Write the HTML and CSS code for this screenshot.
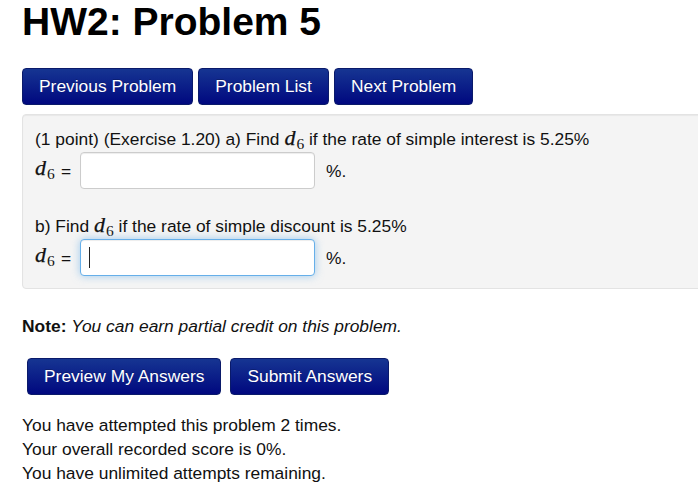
FILE: index.html
```html
<!DOCTYPE html>
<html lang="en">
<head>
<meta charset="utf-8">
<title>HW2: Problem 5</title>
<link rel="stylesheet" href="styles.css">
</head>
<body>
<div class="page">
  <h1 class="title">HW2: Problem 5</h1>
  <nav class="nav">
    <button class="btn nav-btn" type="button">Previous Problem</button>
    <button class="btn nav-btn" type="button">Problem List</button>
    <button class="btn nav-btn" type="button">Next Problem</button>
  </nav>
  <div class="well">
    <p class="line">(1 point) (Exercise 1.20) a) Find <span class="math"><i>d</i><sub>6</sub></span> if the rate of simple interest is 5.25%</p>
    <div class="answer-row">
      <span class="math label"><i>d</i><sub>6</sub></span><span class="eq">=</span>
      <span class="field"><input class="answer" type="text"></span>
      <span class="unit">%.</span>
    </div>
    <p class="line line-b">b) Find <span class="math"><i>d</i><sub>6</sub></span> if the rate of simple discount is 5.25%</p>
    <div class="answer-row">
      <span class="math label"><i>d</i><sub>6</sub></span><span class="eq">=</span>
      <span class="field"><input class="answer focused" type="text"><span class="caret"></span></span>
      <span class="unit">%.</span>
    </div>
  </div>
  <p class="note"><b>Note:</b> <i>You can earn partial credit on this problem.</i></p>
  <div class="actions">
    <button class="btn act-btn" type="button">Preview My Answers</button>
    <button class="btn act-btn" type="button">Submit Answers</button>
  </div>
  <div class="status">
    <p>You have attempted this problem 2 times.</p>
    <p>Your overall recorded score is 0%.</p>
    <p>You have unlimited attempts remaining.</p>
  </div>
</div>
</body>
</html>
```

FILE: styles.css
```css
html, body {
  margin: 0;
  padding: 0;
  background: #fff;
  overflow: hidden;
}
body {
  font-family: "Liberation Sans", Arial, sans-serif;
  font-size: 17.4px;
  line-height: 24px;
  color: #111;
}
.page {
  padding-left: 22px;
}
.title {
  margin: 0;
  padding-top: 2px;
  font-size: 39px;
  line-height: 39px;
  font-weight: bold;
  color: #000;
}
.nav {
  display: flex;
  gap: 5px;
  margin-top: 27px;
}
.btn {
  font-family: "Liberation Sans", Arial, sans-serif;
  font-size: 17.4px;
  color: #fff;
  height: 37px;
  border: 1px solid #0a1a6a;
  border-radius: 4px;
  background: linear-gradient(to bottom, #163592 0%, #00087f 100%);
  cursor: pointer;
  white-space: nowrap;
  text-shadow: 0 -1px 0 rgba(0,0,0,0.2);
}
.nav-btn {
  padding: 0 16px;
}
.well {
  margin-top: 9px;
  margin-right: -40px;
  background: #f4f4f4;
  border: 1px solid #e3e3e3;
  border-radius: 4px;
  box-shadow: inset 0 1px 1px rgba(0,0,0,0.05);
  padding: 12px 12px 12px 12px;
}
.line {
  margin: 0;
}
.line-b {
  margin-top: 25px;
}
.math {
  font-family: "Liberation Serif", "DejaVu Serif", serif;
  font-size: 22px;
  line-height: 0;
  white-space: nowrap;
}
.math i {
  font-style: italic;
  font-weight: normal;
  -webkit-text-stroke: 0.25px #111;
  margin-right: 1px;
}
.math sub {
  font-size: 15.5px;
  font-style: normal;
  vertical-align: -4px;
  line-height: 0;
}
.answer-row {
  display: flex;
  align-items: center;
  margin-top: 1px;
  height: 37px;
}
.label {
  width: 26px;
}
.eq {
  width: 19px;
}
.field {
  position: relative;
  display: block;
}
.answer {
  display: block;
  box-sizing: border-box;
  width: 235px;
  height: 37px;
  border: 1px solid #cccccc;
  border-radius: 4px;
  background: #fff;
  box-shadow: inset 0 1px 1px rgba(0,0,0,0.075);
  padding: 0 8px;
  font-family: "Liberation Sans", Arial, sans-serif;
  font-size: 17px;
  outline: none;
}
.answer.focused {
  border-color: #66afe9;
  box-shadow: inset 0 1px 1px rgba(0,0,0,0.075), 0 0 8px rgba(102,175,233,0.6);
}
.caret {
  position: absolute;
  left: 9px;
  top: 8px;
  width: 1px;
  height: 21px;
  background: #222;
}
.unit {
  margin-left: 11px;
}
.note {
  margin: 25px 0 0 0;
}
.note b {
  font-weight: bold;
}
.actions {
  display: flex;
  gap: 9px;
  margin-top: 20px;
  padding-left: 5px;
}
.act-btn {
  padding: 0 16px;
}
.status {
  margin-top: 18px;
}
.status p {
  margin: 0;
}
```
